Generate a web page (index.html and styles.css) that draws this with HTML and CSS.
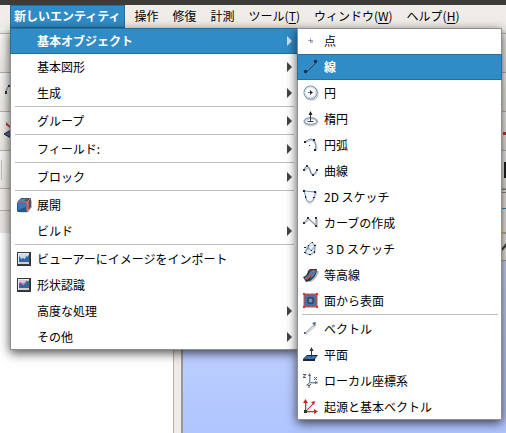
FILE: index.html
```html
<!DOCTYPE html>
<html lang="ja">
<head>
    <meta charset="UTF-8">
    <meta name="viewport" content="width=device-width, initial-scale=1.0">
    <title>新しいエンティティ</title>
    <link rel="stylesheet" href="styles.css">
</head>
<body>
    <div class="titlebar"></div>
    <nav class="menubar">
        <button class="menubar-item active">新しいエンティティ</button>
        <button class="menubar-item">操作</button>
        <button class="menubar-item">修復</button>
        <button class="menubar-item">計測</button>
        <button class="menubar-item">ツール(<u>T</u>)</button>
        <button class="menubar-item">ウィンドウ(<u>W</u>)</button>
        <button class="menubar-item">ヘルプ(<u>H</u>)</button>
    </nav>

    <!-- Main window behind the menus -->
    <div class="strip strip-thin"></div>
    <div class="strip"></div>
    <div class="strip">
        <svg class="tool" width="20" height="20" viewBox="0 0 20 20"><path d="M10 3q-3 2-4 7" fill="none" stroke="#7f9dbd" stroke-width="1.500"/><path d="M8 3h2v2H8zM5 9h2v3H5z" fill="#333"/></svg>
    </div>
    <div class="strip">
        <svg class="tool" width="20" height="20" viewBox="0 0 20 20"><path d="M6 1l4 4v2l-4-3z" fill="#c8332c"/><path d="M4 13l7-4v8z" fill="#46699a" stroke="#222"/></svg>
        <svg class="tool" width="3" height="20" viewBox="0 0 3 20"><path d="M0 11h3v3H0z" fill="#c8332c"/></svg>
    </div>
    <div class="strip strip-last">
        <span class="grip"></span>
        <span class="edge-dark"></span>
    </div>
    <main class="workspace">
        <section class="tree">
            <div class="tree-title"></div>
            <div class="tree-header"></div>
            <div class="tree-body"></div>
        </section>
        <div class="splitter"></div>
        <section class="viewer">
            <div class="viewer-tab"></div>
            <div class="viewer-title"></div>
            <div class="viewer-tools">
                <svg width="4" height="24" viewBox="0 0 4 24"><path d="M0 1h4" stroke="#777" fill="none"/><path d="M0 0h2v2H0z" fill="#d8d800"/><path d="M0 16l4-5v4l-4 4z" fill="#444"/></svg>
            </div>
            <div class="viewer-canvas"></div>
        </section>
    </main>

    <div class="menu menu-main">
        <button class="item selected"><span class="label">基本オブジェクト</span><i class="arrow"></i></button>
        <button class="item"><span class="label">基本図形</span><i class="arrow"></i></button>
        <button class="item"><span class="label">生成</span><i class="arrow"></i></button>
        <hr>
        <button class="item"><span class="label">グループ</span><i class="arrow"></i></button>
        <hr>
        <button class="item"><span class="label">フィールド:</span><i class="arrow"></i></button>
        <hr>
        <button class="item"><span class="label">ブロック</span><i class="arrow"></i></button>
        <hr>
        <button class="item">
            <svg class="icon" viewBox="0 0 16 16"><path d="M3 15.500h9l4-5V4l-3-3" fill="#c4bcba"/><path d="M1 5l4-4h10l-4 4z" fill="#4c5666"/><path d="M11 5l4-4v9l-4 5z" fill="#5b4f55"/><path d="M1 6l1-1h9v10H2l-1-1z" fill="#24558f"/><path d="M2 6h8v4l-8 3z" fill="#3f77b4"/><path d="M5 2h5L8 4H3z" fill="#4f86c0"/><path d="M2 5h9v9M11 5l3-3M12 14V4" fill="none" stroke="#ee7a70"/></svg>
            <span class="label">展開</span>
        </button>
        <button class="item"><span class="label">ビルド</span><i class="arrow"></i></button>
        <hr>
        <button class="item">
            <svg class="icon" viewBox="0 0 16 16"><path d="M1 1h14v14H1z" fill="#333"/><path d="M1.500 1.500h12v12h-12z" fill="#e8eaec" stroke="#3a3a3a"/><path d="M3 3h10v8H3z" fill="#c4dcf2"/><path d="M3 5l1 1 1 2 2-1 2 1 1-3 1 1 2-2v7H3z" fill="#3268a0"/><path d="M3 12h10" stroke="#b5b5b5"/></svg>
            <span class="label">ビューアーにイメージをインポート</span>
        </button>
        <button class="item">
            <svg class="icon" viewBox="0 0 16 16"><path d="M1 1h14v14H1z" fill="#333"/><path d="M1.500 1.500h12v12h-12z" fill="#e8eaec" stroke="#3a3a3a"/><path d="M3 3h10v8H3z" fill="#b9d0e6"/><path d="M3 7l2-1 2 2 2-1 1-2 3-1v7H3z" fill="#3268a0"/><path d="M3 6.500l1.500-1L6 7.500l1.500-1L9 7l1.500-3L12 5l1-1" fill="none" stroke="#d9404a"/><path d="M3 12h10" stroke="#b5b5b5"/></svg>
            <span class="label">形状認識</span>
        </button>
        <button class="item"><span class="label">高度な処理</span><i class="arrow"></i></button>
        <button class="item"><span class="label">その他</span><i class="arrow"></i></button>
    </div>

    <div class="menu menu-sub">
        <button class="item">
            <svg class="icon" viewBox="0 0 16 16"><path d="M8 8h2v2H8z" fill="#bbb"/><path d="M5 7.500h5M7.500 5v5" stroke="#a3b1d3"/><path d="M7 7h1v1H7z" fill="#4a5580"/></svg>
            <span class="label">点</span>
        </button>
        <button class="item selected">
            <svg class="icon" viewBox="0 0 16 16"><path d="M3 13L13 3" stroke="#2c5c88" stroke-width="2"/><path d="M3 12l9-9" stroke="#6f92b8"/><circle cx="2.500" cy="12.500" r="1.700" fill="#1c2c44"/><circle cx="12.500" cy="2.500" r="1.700" fill="#1c2c44"/></svg>
            <span class="label">線</span>
        </button>
        <button class="item">
            <svg class="icon" viewBox="0 0 16 16"><circle cx="8.500" cy="8.500" r="6.500" fill="none" stroke="#ccc" stroke-width="1.500"/><circle cx="7.500" cy="7.500" r="6.500" fill="#fafbfd" stroke="#6a89ac"/><circle cx="7.500" cy="7.500" r="5.500" fill="none" stroke="#c9d6e5"/><path d="M5 7.500h5M7.500 5v5" stroke="#6c7686"/><path d="M7 6.500h2v2H7z" fill="#111"/></svg>
            <span class="label">円</span>
        </button>
        <button class="item">
            <svg class="icon" viewBox="0 0 16 16"><ellipse cx="8" cy="11" rx="6.500" ry="3.500" fill="none" stroke="#ccc" stroke-width="2"/><ellipse cx="7.500" cy="10" rx="6.500" ry="3.300" fill="none" stroke="#7093ba"/><path d="M7.500 2v9M4.500 10.500h6" stroke="#3a4552"/><path d="M5.500 4l2-4 2 4z" fill="#222"/></svg>
            <span class="label">楕円</span>
        </button>
        <button class="item">
            <svg class="icon" viewBox="0 0 16 16"><path d="M3 5q8-5 10 3 1 3 0 6" fill="none" stroke="#ccc" stroke-width="2"/><path d="M2 5q7-6 10 0 2 4 0 8" fill="none" stroke="#7093ba"/><path d="M1 4h2v2H1zM10 2h2v2h-2zM11 12h2v2h-2zM6 8h1v1H6z" fill="#222"/></svg>
            <span class="label">円弧</span>
        </button>
        <button class="item">
            <svg class="icon" viewBox="0 0 16 16"><path d="M2 8q3-6 5-1 2 9 7 2" fill="none" stroke="#ccc" stroke-width="2"/><path d="M1 7q3-8 6 0 2 9 7 0" fill="none" stroke="#5d85b2"/><path d="M0 6h2v2H0zM3 2h2v2H3zM9 11h2v2H9zM13 6h2v2h-2z" fill="#333d4c"/></svg>
            <span class="label">曲線</span>
        </button>
        <button class="item">
            <svg class="icon" viewBox="0 0 16 16"><path d="M2 3l11 1-2 6q-2 4-5 4-3-2-3-5z" fill="none" stroke="#d8d8d8" stroke-width="2"/><path d="M1 2l12 1-2 5q-1 5-5 5-3-1-3-5z" fill="#f8faff" stroke="#7199cc"/><path d="M0 1h2v2H0zM11 2h2v2h-2zM2 7h1v2H2zM10 8h2v1h-2z" fill="#222"/></svg>
            <span class="label">2D スケッチ</span>
        </button>
        <button class="item">
            <svg class="icon" viewBox="0 0 16 16"><path d="M2 8l4-4 8 7V4" fill="none" stroke="#ccc" stroke-width="2"/><path d="M1 8l4-5 8 8V3" fill="none" stroke="#8091a4"/><path d="M0 7h2v2H0zM4 2h2v2H4zM12 2h2v2h-2zM12 10h2v2h-2z" fill="#333"/></svg>
            <span class="label">カーブの作成</span>
        </button>
        <button class="item">
            <svg class="icon" viewBox="0 0 16 16"><path d="M3 8l6-5 4 1-1 8-4 2-6-2z" fill="#e8ecf3" stroke="#d3d3d3"/><path d="M2 7l4-3 3-3 3 4-1 6-4 3-5-2 3-6 3 4 4-5M2 12l4-7M6 4l-1 5" fill="none" stroke="#7a9dcb"/><path d="M1 6h2v1H1zM5 4h1v1H5zM9 1h1v1H9zM11 4h2v1h-2zM8 9h1v1H8zM11 10h1v2h-1zM1 11h2v1H1zM6 13h2v1H6z" fill="#222"/></svg>
            <span class="label">３D スケッチ</span>
        </button>
        <button class="item">
            <svg class="icon" viewBox="0 0 16 16"><path d="M3 13q6 0 8-9l5 0q-1 7-8 11z" fill="#bbb"/><path d="M0 10q4-1 5-6 1-2 3-2h6q0 7-7 12l-4 1z" fill="#2b3644"/><path d="M2 10q4-2 5-6l2-1-3 8-2 2z" fill="#3b6ea5"/><path d="M10 4l3-1q0 5-6 9z" fill="#4a80b8"/><path d="M2 12q5-1 7-7l2-2" fill="none" stroke="#e25550" stroke-width="1.500"/></svg>
            <span class="label">等高線</span>
        </button>
        <button class="item">
            <svg class="icon" viewBox="0 0 16 16"><path d="M1 1h13v13H1z" fill="#44719f" stroke="#ee4545"/><path d="M2 2l3 3M13 2l-3 3M2 13l3-3M13 13l-3-3" stroke="#5b7596"/><path d="M5 5h5v5H5z" fill="#6f94bd" stroke="#1d2733"/><path d="M0 0h2v2H0zM13 0h2v2h-2zM0 13h2v2H0zM13 13h2v2h-2z" fill="#ff2020"/></svg>
            <span class="label">面から表面</span>
        </button>
        <hr>
        <button class="item">
            <svg class="icon" viewBox="0 0 16 16"><path d="M3 13L13 4" stroke="#d8d8d8" stroke-width="2"/><path d="M2 12l10-9" stroke="#86a3c4"/><path d="M9 2l4-1-1 4z" fill="#4a6484"/><path d="M1 11h2v2H1z" fill="#667"/></svg>
            <span class="label">ベクトル</span>
        </button>
        <button class="item">
            <svg class="icon" viewBox="0 0 16 16"><path d="M0 12l4-4h11l-3 4v2H0z" fill="#182838"/><path d="M1 12l3-3h10l-3 3z" fill="#3d73ab"/><path d="M8.500 2v8" stroke="#2a3440"/><path d="M6.500 4l2-4 2 4z" fill="#333"/></svg>
            <span class="label">平面</span>
        </button>
        <button class="item">
            <svg class="icon" viewBox="0 0 16 16"><path d="M7 2v8h8M7 10l-4 3" fill="none" stroke="#ccc" stroke-width="2"/><path d="M6.500 1v8.500H14M6.500 9.500L4 12" fill="none" stroke="#7093ba"/><path d="M5 3l1.500-3L8 3zM12 8l3 1.500-3 1.500z" fill="#48688c"/><path d="M0 1.500h3L0 4.500h3M11 4l3 3M14 4l-3 3M4 11l2 2 2-2M6 13v2" fill="none" stroke="#555"/></svg>
            <span class="label">ローカル座標系</span>
        </button>
        <button class="item">
            <svg class="icon" viewBox="0 0 16 16"><path d="M3 3v10h10M3 12l8-8" fill="none" stroke="#dccaca" stroke-width="2"/><path d="M2.500 2v10.500H13M2.500 12.500L11 4" fill="none" stroke="#d8383c"/><path d="M0 4l2.500-4L5 4zM11 10l4 2.500-4 2.500zM8 3l4-1-1 4z" fill="#cc2328"/><path d="M1 11h3v3H1z" fill="#333"/></svg>
            <span class="label">起源と基本ベクトル</span>
        </button>
    </div>
</body>
</html>
```
FILE: styles.css
```css
* {
    box-sizing: border-box;
}

body {
    margin: 0;
    min-height: 100vh;
    display: flex;
    flex-direction: column;
    overflow: hidden;
    background: #efebe7;
    color: #000;
    font-family: "Noto Sans CJK JP", sans-serif;
    font-size: 12px;
}

button {
    margin: 0;
    border: none;
    background: none;
    color: inherit;
    font: inherit;
    text-align: left;
    white-space: nowrap;
}

.titlebar {
    height: 5px;
    background: #3c3b37;
}

.menubar {
    display: flex;
    gap: 6px;
    height: 23px;
    padding-left: 10px;
    background: #f0ece8;
}

.menubar-item {
    padding: 0 4px 1px;
    line-height: 22px;
}

.menubar-item u {
    text-underline-offset: 2px;
}

.menubar-item.active {
    background: #308cc6;
    border: 1px solid #236f9f;
    padding: 0 3px 1px;
    line-height: 20px;
    color: #fff;
    font-weight: bold;
}

/* Toolbars */
.strip {
    display: flex;
    justify-content: space-between;
    align-items: center;
    height: 39px;
    background: linear-gradient(#f6f4f1, #e9e5e0);
    border-bottom: 1px solid #b5b1ad;
}

.strip-thin {
    height: 6px;
}

.strip-last {
    height: 38px;
}

.grip {
    width: 2px;
    height: 20px;
    border-right: 1px solid #c4c0bc;
}

.edge-dark {
    width: 2px;
    height: 16px;
    background: #222;
}

/* Tree and 3D view */
.workspace {
    flex: 1;
    display: flex;
}

.tree {
    flex: 0 0 173px;
    display: flex;
    flex-direction: column;
}

.tree-title {
    height: 22px;
    border-bottom: 1px solid #b5b1ad;
}

.tree-header {
    height: 22px;
    background: #ebe5e1;
}

.tree-body {
    flex: 1;
    background: #fff;
}

.splitter {
    width: 10px;
    background: #efebe7;
    border-left: 1px solid #b4b0ac;
    border-right: 2px solid #9c9794;
}

.viewer {
    flex: 1;
    display: flex;
    flex-direction: column;
}

.viewer-tab {
    height: 20px;
    border-top: 4px double #8e8a87;
    border-bottom: 1px solid #308cc6;
}

.viewer-title {
    height: 23px;
}

.viewer-tools {
    height: 29px;
    text-align: right;
    border-bottom: 1px solid #a09c99;
}

.viewer-canvas {
    flex: 1;
    background: linear-gradient(#cad9ff, #b0c4ff);
}

/* Popup menus */
.menu {
    position: absolute;
    top: 28px;
    background: #fff;
    box-shadow: inset 0 0 0 1px #8f8f8b, 0 3px 10px rgba(0, 0, 0, 0.7);
}

.menu-main {
    left: 10px;
    width: 288px;
}

.menu-sub {
    left: 297px;
    width: 205px;
}

.item {
    display: flex;
    align-items: center;
    width: 100%;
    height: 26px;
    padding: 0 6px 0 27px;
}

.icon {
    flex: none;
    width: 16px;
    height: 16px;
    margin-left: -21px;
    margin-right: 5px;
}

.label {
    flex: 1;
    padding-bottom: 2px;
}

.selected {
    background: #308cc6;
    border: 1px solid #236f9f;
    padding: 0 5px 0 26px;
    color: #fff;
    font-weight: bold;
}

.arrow {
    border-left: 5px solid #444;
    border-top: 5px solid transparent;
    border-bottom: 5px solid transparent;
}

.selected .arrow {
    border-left-color: #cde3f1;
}

.menu hr {
    height: 1px;
    margin: 0 4px 1px 5px;
    border: none;
    background: #bdbdbd;
}
```
